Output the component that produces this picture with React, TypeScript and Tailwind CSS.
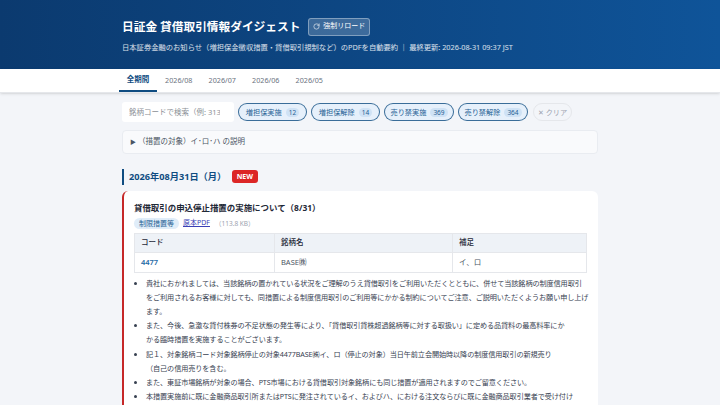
import { RotateCw } from "lucide-react";

const font = { fontFamily: '"Noto Sans", "Noto Sans CJK JP", sans-serif' };

const months = ["2026/08", "2026/07", "2026/06", "2026/05"];

const filters = [
  { label: "増担保実施", count: 12, width: "w-[69px]" },
  { label: "増担保解除", count: 14, width: "w-[69px]" },
  { label: "売り禁実施", count: 369, width: "w-[70px]" },
  { label: "売り禁解除", count: 364, width: "w-[70px]" },
];

// line ends follow the reference, the font here has other kana widths
const bullets = [
  "貴社におかれましては、当該銘柄の置かれている状況をご理解のうえ貸借取引をご利用いただくとともに、併せて当該銘柄の制度信用取引\nをご利用されるお客様に対しても、同措置による制度信用取引のご利用等にかかる制約についてご注意、ご説明いただくようお願い申し上げ\nます。",
  "また、今後、急激な貸付株券の不足状態の発生等により、「貸借取引貸株超過銘柄等に対する取扱い」に定める品貸料の最高料率にか\nかる臨時措置を実施することがございます。",
  "記１、対象銘柄コード対象銘柄停止の対象4477BASE㈱イ、ロ（停止の対象）当日午前立会開始時以降の制度信用取引の新規売り\n（自己の信用売りを含む。",
  "また、東証市場銘柄が対象の場合、PTS市場における貸借取引対象銘柄にも同じ措置が適用されますのでご留意ください。",
  "本措置実施前に既に金融商品取引所またはPTSに発注されているイ、およびハ、における注文ならびに既に金融商品取引業者で受け付け",
];

export default function App() {
  return (
    <div className="h-[405px] w-[720px] overflow-hidden bg-[#f3f5f9] text-[#1f2937] [font-feature-settings:'pkna']" style={font}>
      <header className="h-[69px] bg-gradient-to-r from-[#0b3a6f] to-[#0f5499] pl-[122px] pt-[16px] text-white">
        <div className="flex items-center gap-[8px]">
          <h1 className="text-[11.7px] font-bold leading-[21px]">日証金 貸借取引情報ダイジェスト</h1>
          <button className="flex h-[18px] w-[62px] items-center justify-center gap-[3px] rounded-[3px] border border-white/35 bg-white/20 text-[7px]">
            <RotateCw size={7} />
            強制リロード
          </button>
        </div>
        <p className="mt-[3px] text-[7.3px] leading-[14px] text-white/85">
          日本証券金融のお知らせ（増担保金徴収措置・貸借取引規制など）のPDFを自動要約 ｜ 最終更新: 2026-08-31 09:37 JST
        </p>
      </header>

      <nav className="flex h-[24px] items-stretch border-b border-[#e5e7eb] bg-white pl-[119px] text-[7.2px] shadow-sm">
        <span className="flex w-[38px] items-center justify-center border-b-2 border-[#0f4c81] text-[7.5px] font-bold text-[#0f4c81]">全期間</span>
        {months.map((m) => (
          <span key={m} className="flex w-[43.5px] items-center justify-center text-[#6b7280]">
            {m}
          </span>
        ))}
      </nav>

      <main className="mx-auto w-[476px] pt-[9px]">
        <div className="flex items-center gap-[4px]">
          <input
            readOnly
            placeholder="銘柄コードで検索（例: 3133）"
            className="h-[20px] w-[112px] rounded-[3px] bg-white pl-[7px] pr-[14px] text-[7.5px] placeholder:text-[#8b8f96]"
          />
          {filters.map((f) => (
            <button key={f.label} className={`${f.width} flex h-[18px] shrink-0 items-center justify-center gap-[4px] whitespace-nowrap rounded-full border border-[#0f4c81]/80 bg-[#e6f0fb] text-[7.2px] text-[#1f5f94]`}>
              {f.label}
              <span className="rounded-full bg-[#cfe2f5] px-[3px] text-[6.5px] leading-[9px]">{f.count}</span>
            </button>
          ))}
          <button className="ml-[1px] flex h-[18px] w-[39px] shrink-0 items-center justify-center whitespace-nowrap rounded-full border border-[#e5e7eb] text-[7.2px] text-[#9ca3af]">✕ クリア</button>
        </div>

        <div className="mt-[8px] flex h-[24px] items-center rounded-[4px] border border-[#e9ecf1] bg-[#f9fafc] px-[7px] text-[7.5px] text-[#4b5563]">
          <span className="mr-[2px] text-[6px]">▶</span>（措置の対象）イ･ロ･ハ の説明
        </div>

        <div className="mt-[14.5px] flex items-center border-l-[2.5px] border-[#0f4c81] pl-[5px]">
          <h2 className="text-[9.2px] font-bold leading-[16px] text-[#0f4c81]">2026年08月31日（月）</h2>
          <span className="ml-[6px] rounded-[3px] bg-[#dc2626] px-[4.5px] text-[7px] font-bold leading-[13px] text-white">NEW</span>
        </div>

        <article className="mt-[6.5px] rounded-[6px] border-l-[2.5px] border-[#c62828] bg-white pb-[10px] pl-[10px] pr-[10px] pt-[9px]">
          <h3 className="text-[8.45px] font-bold leading-[15px] text-[#1f2937]">貸借取引の申込停止措置の実施について（8/31）</h3>
          <div className="mt-[3px] flex items-center gap-[4px] text-[7px]">
            <span className="rounded-full bg-[#e0edf9] px-[5px] leading-[11px] text-[#1f5f94]">制限措置等</span>
            <span className="text-[#3b3fb5] underline">原本PDF</span>
            <span className="ml-[1px] text-[6.5px] text-[#9ca3af]">（113.8 KB）</span>
          </div>
          <table className="mt-[4px] w-[453px] table-fixed border-collapse text-[7.5px]">
            <colgroup>
              <col className="w-[140px]" />
              <col className="w-[178px]" />
              <col />
            </colgroup>
            <thead>
              <tr className="bg-[#eef2f7]">
                <th className="h-[19px] border border-[#e5e7eb] px-[6px] text-left font-medium">コード</th>
                <th className="border border-[#e5e7eb] px-[6px] text-left font-medium">銘柄名</th>
                <th className="border border-[#e5e7eb] px-[6px] text-left font-medium">補足</th>
              </tr>
            </thead>
            <tbody>
              <tr>
                <td className="h-[20px] border border-[#e5e7eb] px-[6px] font-semibold text-[#1f6aa5]">4477</td>
                <td className="border border-[#e5e7eb] px-[6px] text-[#4b5563]">BASE㈱</td>
                <td className="border border-[#e5e7eb] px-[6px] text-[#4b5563]">イ、ロ</td>
              </tr>
            </tbody>
          </table>
          <ul className="-mr-[3px] mt-[3px] list-disc whitespace-pre-line pl-[12px] text-[7.15px] leading-[14px] tracking-[-0.1px] text-[#374151]">
            {bullets.map((b) => (
              <li key={b} className="mb-[0.3px]">{b}</li>
            ))}
          </ul>
        </article>
      </main>
    </div>
  );
}
